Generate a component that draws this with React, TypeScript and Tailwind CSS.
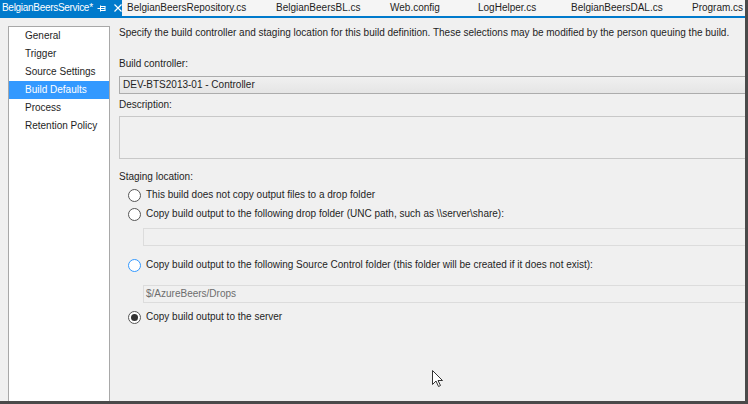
import { useState } from 'react';

const tabs = [
  { title: 'BelgianBeersRepository.cs', left: 127 },
  { title: 'BelgianBeersBL.cs', left: 276 },
  { title: 'Web.config', left: 390 },
  { title: 'LogHelper.cs', left: 478 },
  { title: 'BelgianBeersDAL.cs', left: 571 },
  { title: 'Program.cs', left: 692 },
];

const pages = ['General', 'Trigger', 'Source Settings', 'Build Defaults', 'Process', 'Retention Policy'];

const options = [
  'This build does not copy output files to a drop folder',
  'Copy build output to the following drop folder (UNC path, such as \\\\server\\share):',
  'Copy build output to the following Source Control folder (this folder will be created if it does not exist):',
  'Copy build output to the server',
];

// top margin of each radio row, taken from the screenshot
const optionGaps = ['mt-[4px]', 'mt-[5px]', 'mt-[12px]', 'mt-[7px]'];

function Radio({ checked, hover }: { checked: boolean; hover?: boolean }) {
  return (
    <span
      className={`flex h-[13px] w-[13px] shrink-0 items-center justify-center rounded-full border bg-white ${
        hover ? 'border-[#3399ff]' : 'border-[#555]'
      }`}
    >
      {checked && <span className="h-[7px] w-[7px] rounded-full bg-[#333]" />}
    </span>
  );
}

export default function App() {
  const [selected, setSelected] = useState('Build Defaults');
  const [staging, setStaging] = useState(3);

  return (
    <div className="relative flex h-[404px] w-[748px] flex-col overflow-hidden border-r-[3px] border-b-[3px] border-[#4a4a4a] bg-[#f0f0f0] font-['Liberation_Sans',sans-serif] text-[10px] leading-[14px] text-[#1e1e1e]">
      {/* TAB STRIP */}
      <div className="flex h-[18px] shrink-0 border-b-2 border-[#007acc] bg-[#f5f5f5]">
        <div className="flex h-[16px] w-[122px] shrink-0 items-center bg-[#007acc] pl-[2px] text-white">
          <span className="w-[95px] shrink-0 whitespace-nowrap tracking-[-0.3px]">BelgianBeersService*</span>
          <svg className="shrink-0" width="9" height="7" viewBox="0 0 9 7">
            <path d="M0.5 3.5 H3.5 M3.5 0.5 V6.5 M3.5 1.5 H8.5 M3.5 5.5 H8.5 M8 1.5 V5.5 M4 3.5 H8" stroke="white" strokeWidth="1" fill="none" />
          </svg>
          <svg className="ml-[8px] shrink-0" width="8" height="8" viewBox="0 0 8 8">
            <path d="M0.5 0.5 L7.5 7.5 M7.5 0.5 L0.5 7.5" stroke="white" strokeWidth="1.2" />
          </svg>
        </div>
        <div className="relative h-[16px] flex-1">
          {tabs.map(({ title, left }) => (
            <span key={title} className="absolute top-[1px]" style={{ left: left - 122 }}>
              {title}
            </span>
          ))}
        </div>
      </div>

      {/* BODY */}
      <div className="flex min-h-0 flex-1 pt-[8px]">
        <div className="ml-[8px] w-[102px] shrink-0 border border-b-0 border-[#a8a8a8] bg-white">
          {pages.map(page => (
            <div
              key={page}
              className={`flex h-[18px] cursor-pointer items-center pl-[16px] ${
                selected === page ? 'bg-[#3399ff] text-white' : ''
              }`}
              onClick={() => setSelected(page)}
            >
              {page}
            </div>
          ))}
        </div>

        <div className="flex min-w-0 flex-1 flex-col pl-[9px]">
          <p className="whitespace-nowrap">
            Specify the build controller and staging location for this build definition. These selections may be modified by
            the person queuing the build.
          </p>

          <p className="mt-[17px]">Build controller:</p>
          <div className="mt-[5px] flex h-[18px] items-center border border-r-0 border-[#acacac] bg-gradient-to-b from-[#f0f0f0] to-[#e5e5e5] pl-[3px]">
            DEV-BTS2013-01 - Controller
          </div>

          <p className="mt-[4px]">Description:</p>
          <div className="mt-[4px] h-[43px] border border-r-0 border-[#c8c8c8]" />

          <p className="mt-[11px]">Staging location:</p>

          {options.map((label, index) => (
            <div key={index}>
              <div
                className={`${optionGaps[index]} flex h-[14px] cursor-pointer items-center gap-[5px] pl-[9px]`}
                onClick={() => setStaging(index)}
              >
                <Radio checked={staging === index} hover={index === 2} />
                <span className="whitespace-nowrap">{label}</span>
              </div>
              {index === 1 && (
                <div className="mt-[7px] ml-[24px] h-[18px] border border-r-0 border-[#dcdcdc] bg-[#f0f0f0]" />
              )}
              {index === 2 && (
                <div className="mt-[13px] ml-[24px] flex h-[18px] items-center border border-r-0 border-[#dcdcdc] pl-[2px] text-[#6d6d6d]">
                  $/AzureBeers/Drops
                </div>
              )}
            </div>
          ))}
        </div>
      </div>

      {/* MOUSE POINTER */}
      <svg className="absolute left-[432px] top-[370px]" width="12" height="18" viewBox="0 0 12 18">
        <path d="M0.5 0.5 V14.5 L4 11 L6.5 16.5 L8.5 15.5 L6 10.5 H10.5 Z" fill="white" stroke="#333" strokeWidth="1" />
      </svg>
    </div>
  );
}
